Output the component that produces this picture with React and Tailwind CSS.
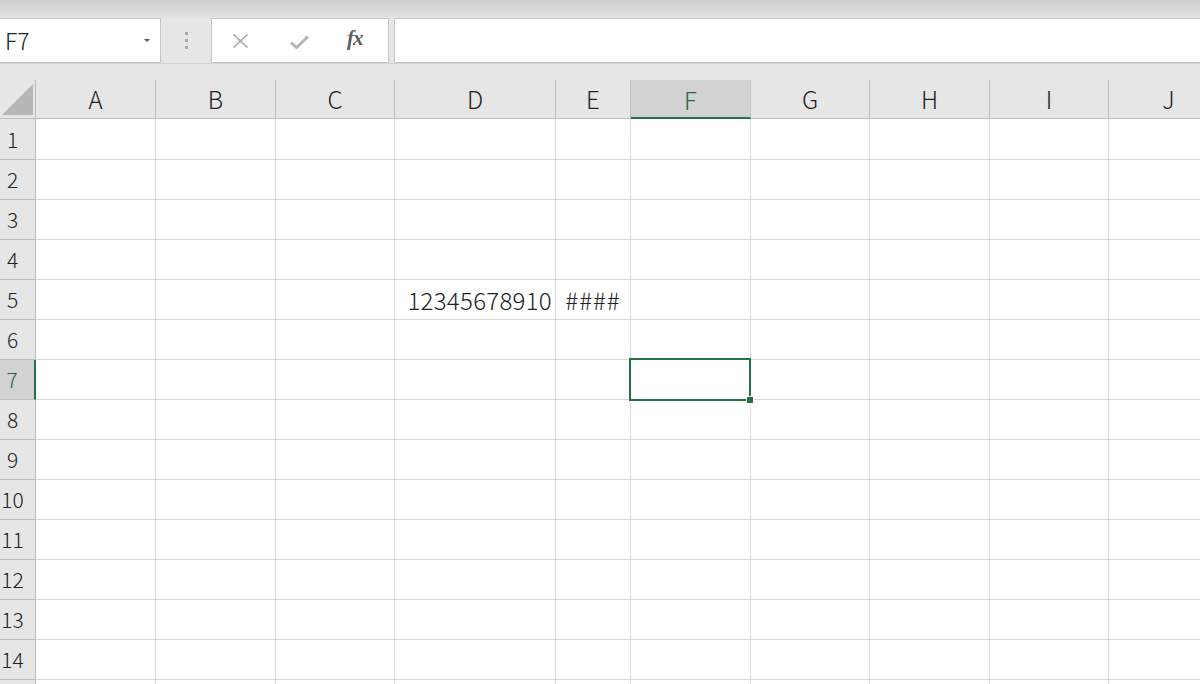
import React from "react";

const COLS = [
  { l: "A", w: "w-[120px]" },
  { l: "B", w: "w-[120px]" },
  { l: "C", w: "w-[119px]" },
  { l: "D", w: "w-[161px]" },
  { l: "E", w: "w-[75px]" },
  { l: "F", w: "w-[120px]" },
  { l: "G", w: "w-[119px]" },
  { l: "H", w: "w-[120px]" },
  { l: "I", w: "w-[119px]" },
  { l: "J", w: "w-[120px]" },
];

function Toolbar() {
  return (
    <div className="h-[63px] bg-[#e6e6e6] flex flex-col">
      <div className="h-[18px] bg-gradient-to-b from-[#cdcdcd] to-[#e4e4e4]" />
      <div className="h-[45px] flex items-stretch">
        <div className="-ml-px w-[162px] bg-white border border-[#c6c6c6] flex items-center relative">
          <span className="pl-[5px] text-[23px] text-[#222] font-light leading-none">F7</span>
          <svg className="absolute left-[144px] top-[20px]" width="6" height="3" viewBox="0 0 6 3">
            <path d="M0 0 L6 0 L3 3 Z" fill="#555" />
          </svg>
        </div>
        <div className="w-[50px] flex flex-col items-center justify-center gap-[4px]">
          <div className="w-[3px] h-[3px] bg-[#a9a9a9]" />
          <div className="w-[3px] h-[3px] bg-[#a9a9a9]" />
          <div className="w-[3px] h-[3px] bg-[#a9a9a9]" />
        </div>
        <div className="w-[178px] bg-white border border-[#c6c6c6] flex items-center relative">
          <svg className="absolute left-[20px] top-[15px]" width="17" height="14" viewBox="0 0 17 14">
            <path d="M1.5 0.5 L15.5 13.5 M15.5 0.5 L1.5 13.5" stroke="#a9a9a9" strokeWidth="1.6" fill="none" />
          </svg>
          <svg className="absolute left-[78px] top-[16px]" width="19" height="14" viewBox="0 0 19 14">
            <path d="M1 7.5 L6.5 12.5 L18 1.5" stroke="#b4b4b4" strokeWidth="3" fill="none" />
          </svg>
          <span className="absolute left-[135px] top-[9px] text-[21px] italic font-bold text-[#5d5d5d] font-['Liberation_Serif',serif] leading-none tracking-[-1px]">
            fx
          </span>
        </div>
        <div className="w-[5px]" />
        <div className="flex-1 -mr-px bg-white border border-[#c6c6c6]" />
      </div>
    </div>
  );
}

function HeaderRow() {
  return (
    <div className="flex h-[39px]">
      <div className="w-[36px] shrink-0 border-r border-b border-[#bdbdbd] relative">
        <svg className="absolute left-[1px] top-[3px]" width="33" height="33" viewBox="0 0 33 33">
          <path d="M32 1 L32 32 L1 32 Z" fill="#b6b6b6" />
        </svg>
      </div>
      {COLS.map((c) => {
        const sel = c.l === "F";
        return (
          <div
            key={c.l}
            className={
              c.w +
              " shrink-0 flex items-center justify-center text-[24px] leading-none font-light " +
              (sel
                ? "bg-[#d2d2d2] border-r border-[#c6c6c6] border-b-2 border-b-[#217346] text-[#1f6b45]"
                : "border-r border-b border-[#bdbdbd] text-[#222]")
            }
          >
            <span className={sel ? "mt-[2px]" : ""}>{c.l}</span>
          </div>
        );
      })}
    </div>
  );
}

function Row({ n, label }) {
  const selRow = n === 7;
  return (
    <div className={"flex " + (n === 1 ? "h-[41px]" : "h-[40px]")}>
      <div
        className={
          "w-[36px] shrink-0 flex items-center justify-center pr-[10px] text-[21px] font-light leading-none overflow-visible whitespace-nowrap " +
          (selRow
            ? "bg-[#d2d2d2] border-r-2 border-r-[#217346] border-b border-b-[#bdbdbd] text-[#1f6b45]"
            : "bg-[#e6e6e6] border-r border-b border-[#bdbdbd] text-[#222]")
        }
      >
        {label ? n : ""}
      </div>
      {COLS.map((c) => {
        const isSel = n === 7 && c.l === "F";
        let content = null;
        if (n === 5 && c.l === "D")
          content = <span className="w-full text-right pr-[3px] tracking-[0.3px]">12345678910</span>;
        if (n === 5 && c.l === "E")
          content = <span className="w-full text-center tracking-[1px]">####</span>;
        return (
          <div
            key={c.l}
            className={
              c.w +
              " shrink-0 border-r border-b border-[#d9d9d9] flex items-center text-[24px] font-light text-[#222] leading-none relative whitespace-nowrap"
            }
          >
            {content}
            {isSel && (
              <div className="absolute z-10 left-[-2px] top-[-2px] w-[122px] h-[43px] border-2 border-[#217346]">
                <div className="absolute right-[-5px] bottom-[-5px] w-[8px] h-[8px] bg-[#217346] border border-white" />
              </div>
            )}
          </div>
        );
      })}
    </div>
  );
}

export default function App() {
  const rows = Array.from({ length: 15 }, (_, i) => i + 1);
  return (
    <div className="w-[1200px] h-[684px] overflow-hidden bg-white font-['Noto_Sans_CJK_JP','Noto_Sans',sans-serif]">
      <Toolbar />
      <div className="h-[17px] bg-[#e6e6e6] border-t border-[#d2d2d2]" />
      <div className="w-[1300px] bg-[#e6e6e6]">
        <HeaderRow />
        <div className="bg-white">
          {rows.map((n) => (
            <Row key={n} n={n} label={n <= 14} />
          ))}
        </div>
      </div>
    </div>
  );
}
